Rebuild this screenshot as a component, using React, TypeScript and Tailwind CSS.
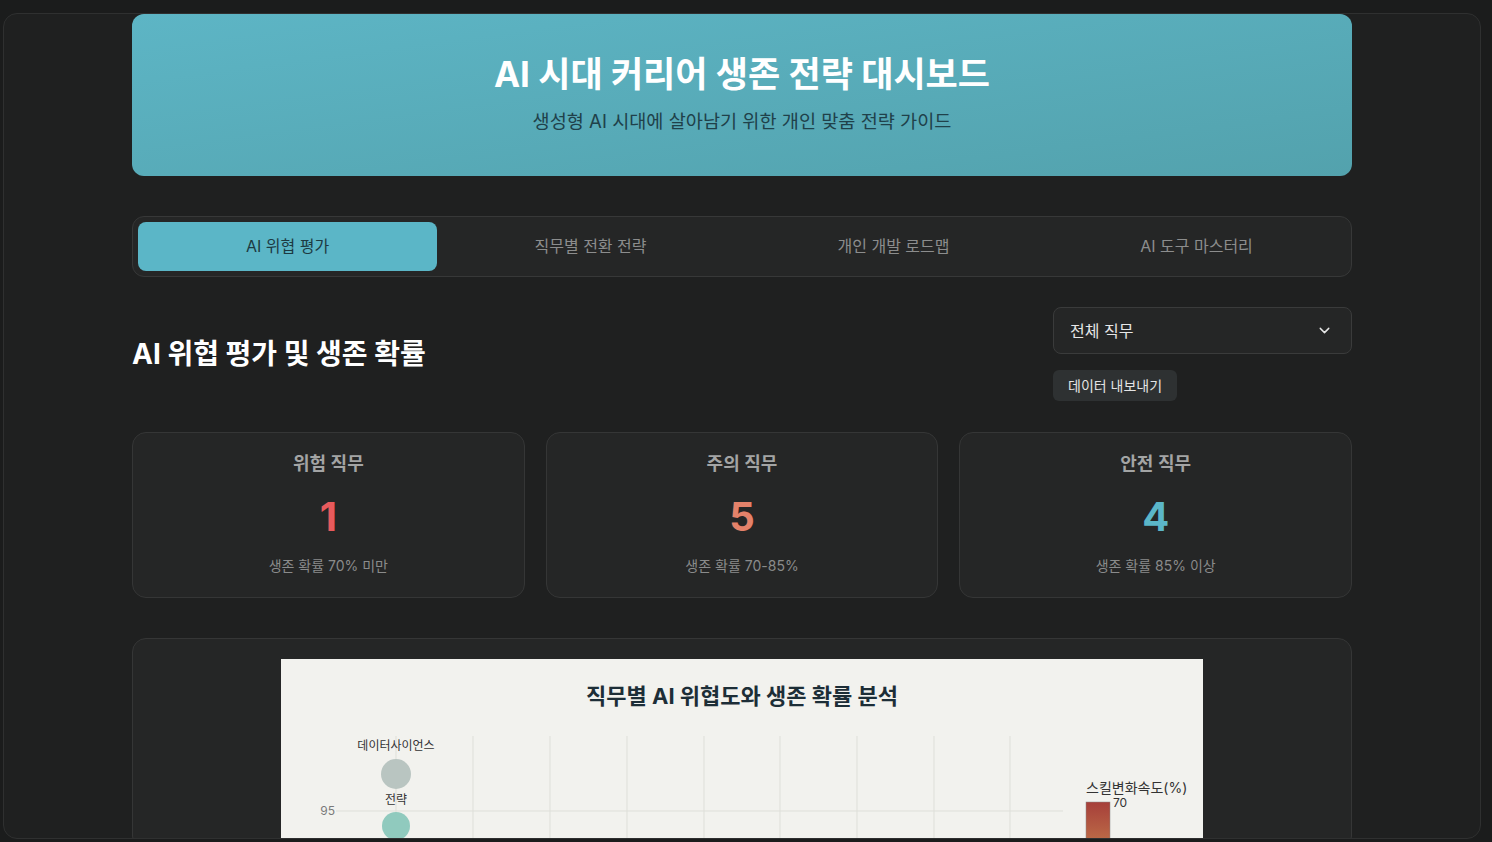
import { ChevronDown } from 'lucide-react';

const tabs = ['AI 위협 평가', '직무별 전환 전략', '개인 개발 로드맵', 'AI 도구 마스터리'];

const stats = [
  { title: '위험 직무', value: '1', color: 'text-[#e85a5c]', note: '생존 확률 70% 미만' },
  { title: '주의 직무', value: '5', color: 'text-[#e4826a]', note: '생존 확률 70-85%' },
  { title: '안전 직무', value: '4', color: 'text-[#5bb6c8]', note: '생존 확률 85% 이상' },
];

const gridX = [115, 192, 269, 346, 423, 499, 576, 653, 729];

const Chart = () => (
  <svg width={922} height={190} viewBox="0 0 922 190" className="block">
    <defs>
      <linearGradient id="skill" x1="0" y1="0" x2="0" y2="1">
        <stop offset="0" stopColor="#a63f3a" />
        <stop offset="1" stopColor="#c8824e" />
      </linearGradient>
    </defs>
    <rect width={922} height={190} fill="#f2f2ee" />
    <text x={461} y={45} textAnchor="middle" fontSize={22} fontWeight={700} fill="#1d2e37">
      직무별 AI 위협도와 생존 확률 분석
    </text>
    {gridX.map((x) => (
      <line key={x} x1={x} y1={77} x2={x} y2={190} stroke="#dedfd9" strokeWidth={1} />
    ))}
    <line x1={55} y1={152} x2={782} y2={152} stroke="#dedfd9" strokeWidth={1} />
    <text x={54} y={156} textAnchor="end" fontSize={12} fill="#7a7a7a">95</text>
    <text x={115} y={91} textAnchor="middle" fontSize={12} fill="#333">데이터사이언스</text>
    <circle cx={115} cy={115} r={15} fill="#b9c5c1" />
    <text x={115} y={145} textAnchor="middle" fontSize={12} fill="#333">전략</text>
    <circle cx={115} cy={167} r={14} fill="#90cabe" />
    <text x={805} y={134} fontSize={14} fill="#333">스킬변화속도(%)</text>
    <rect x={805} y={143} width={24} height={60} fill="url(#skill)" stroke="#8a8a8a" strokeWidth={0.5} />
    <text x={832} y={148} fontSize={12} fill="#333">70</text>
  </svg>
);

export default function App() {
  return (
    <div
      className="h-[842px] w-full overflow-hidden bg-[#1b1c1c] pt-[13px]"
      style={{ fontFamily: 'Inter, "Noto Sans CJK KR", sans-serif' }}
    >
      <div className="ml-[3px] h-[826px] w-[1478px] overflow-hidden rounded-[14px] border border-[#2f3030] bg-[#1f2020]">
        <div className="mx-auto w-[1220px]">
          {/* Hero */}
          <div className="flex h-[162px] flex-col items-center justify-center rounded-[12px] bg-gradient-to-br from-[#5db5c5] to-[#53a2ad] pb-[3px]">
            <h1 className="text-[35px] font-bold leading-none text-white">AI 시대 커리어 생존 전략 대시보드</h1>
            <p className="mt-[20px] text-[18.6px] leading-none text-[#20414a]">생성형 AI 시대에 살아남기 위한 개인 맞춤 전략 가이드</p>
          </div>

          {/* Tabs */}
          <div className="mt-10 grid h-[61px] grid-cols-4 gap-1 rounded-[12px] border border-[#373838] bg-[#252626] p-[5px]">
            {tabs.map((t, i) => (
              <div
                key={t}
                className={
                  i === 0
                    ? 'flex items-center justify-center rounded-[8px] bg-[#5bb6c7] pb-[2px] text-[16px] text-[#1d3a42]'
                    : 'flex items-center justify-center rounded-[8px] pb-[2px] text-[16px] text-[#8c8d8d]'
                }
              >
                {t}
              </div>
            ))}
          </div>

          {/* Section header */}
          <div className="mt-[30px] flex items-center justify-between">
            <h2 className="text-[28px] font-bold text-white">AI 위협 평가 및 생존 확률</h2>
            <div className="flex w-[299px] flex-col items-start gap-4">
              <div className="flex h-[47px] w-full items-center justify-between rounded-[8px] border border-[#3a3b3b] bg-[#252626] px-4 text-[16px] text-[#e6e6e6]">
                <span>전체 직무</span>
                <ChevronDown size={17} strokeWidth={2} className="mr-[2px] text-[#e6e6e6]" />
              </div>
              <button className="h-[31px] rounded-[6px] bg-[#2e3132] px-[15px] text-[14px] text-[#e4e4e4]">데이터 내보내기</button>
            </div>
          </div>

          {/* Stats */}
          <div className="mt-[31px] grid grid-cols-3 gap-[21px]">
            {stats.map((s) => (
              <div
                key={s.title}
                className="flex h-[166px] flex-col items-center rounded-[14px] border border-[#353636] bg-[#252626] pt-[17px]"
              >
                <div className="text-[18px] font-semibold leading-[28px] text-[#a3a4a4]">{s.title}</div>
                <div className={`mt-[15px] text-[40px] font-bold leading-[48px] ${s.color}`}>{s.value}</div>
                <div className="mt-[15px] text-[14px] leading-[20px] text-[#8a8b8b]">{s.note}</div>
              </div>
            ))}
          </div>

          {/* Chart */}
          <div className="mt-10 flex justify-center rounded-[14px] border border-[#353636] bg-[#252626] pt-[20px]">
            <Chart />
          </div>
        </div>
      </div>
    </div>
  );
}
